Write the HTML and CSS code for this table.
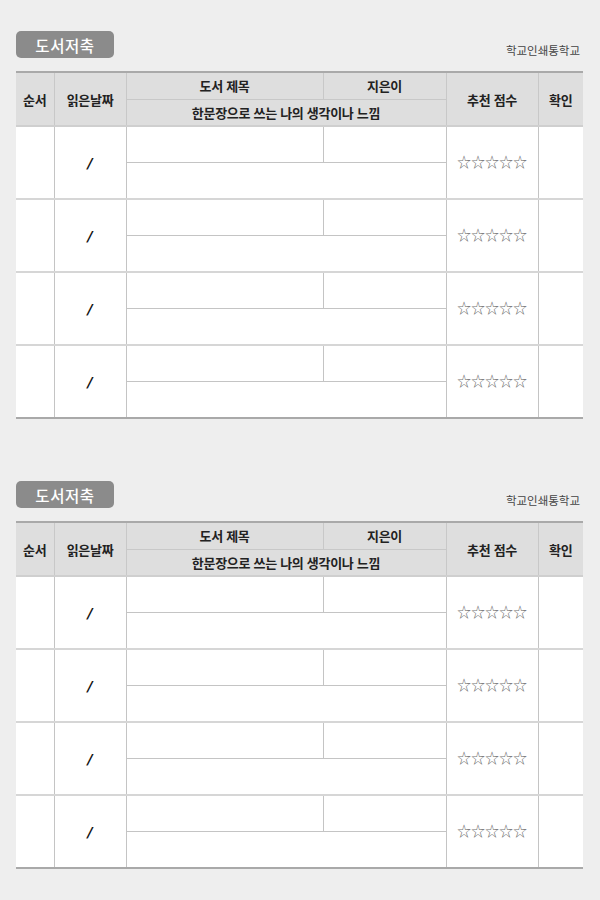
FILE: index.html
```html
<!DOCTYPE html>
<html lang="ko">
<head>
<meta charset="utf-8">
<title>도서저축</title>
<link rel="stylesheet" href="styles.css">
</head>
<body>
<section class="sheet">
  <div class="sheet-head">
    <span class="badge">도서저축</span>
    <span class="school">학교인쇄통학교</span>
  </div>
  <table class="log">
    <colgroup>
      <col class="c-no"><col class="c-date"><col class="c-title"><col class="c-author"><col class="c-score"><col class="c-check">
    </colgroup>
    <thead>
      <tr>
        <th rowspan="2">순서</th>
        <th rowspan="2">읽은날짜</th>
        <th class="th-top">도서 제목</th>
        <th class="th-top">지은이</th>
        <th rowspan="2">추천 점수</th>
        <th rowspan="2">확인</th>
      </tr>
      <tr>
        <th colspan="2" class="th-bottom">한문장으로 쓰는 나의 생각이나 느낌</th>
      </tr>
    </thead>
    <tbody>
      <tr class="r-top"><td rowspan="2"></td><td rowspan="2" class="date">/</td><td></td><td></td><td rowspan="2" class="stars">☆☆☆☆☆</td><td rowspan="2"></td></tr>
      <tr class="r-bottom"><td colspan="2"></td></tr>
    </tbody>
    <tbody>
      <tr class="r-top"><td rowspan="2"></td><td rowspan="2" class="date">/</td><td></td><td></td><td rowspan="2" class="stars">☆☆☆☆☆</td><td rowspan="2"></td></tr>
      <tr class="r-bottom"><td colspan="2"></td></tr>
    </tbody>
    <tbody>
      <tr class="r-top"><td rowspan="2"></td><td rowspan="2" class="date">/</td><td></td><td></td><td rowspan="2" class="stars">☆☆☆☆☆</td><td rowspan="2"></td></tr>
      <tr class="r-bottom"><td colspan="2"></td></tr>
    </tbody>
    <tbody>
      <tr class="r-top"><td rowspan="2"></td><td rowspan="2" class="date">/</td><td></td><td></td><td rowspan="2" class="stars">☆☆☆☆☆</td><td rowspan="2"></td></tr>
      <tr class="r-bottom"><td colspan="2"></td></tr>
    </tbody>
  </table>
</section>

<section class="sheet">
  <div class="sheet-head">
    <span class="badge">도서저축</span>
    <span class="school">학교인쇄통학교</span>
  </div>
  <table class="log">
    <colgroup>
      <col class="c-no"><col class="c-date"><col class="c-title"><col class="c-author"><col class="c-score"><col class="c-check">
    </colgroup>
    <thead>
      <tr>
        <th rowspan="2">순서</th>
        <th rowspan="2">읽은날짜</th>
        <th class="th-top">도서 제목</th>
        <th class="th-top">지은이</th>
        <th rowspan="2">추천 점수</th>
        <th rowspan="2">확인</th>
      </tr>
      <tr>
        <th colspan="2" class="th-bottom">한문장으로 쓰는 나의 생각이나 느낌</th>
      </tr>
    </thead>
    <tbody>
      <tr class="r-top"><td rowspan="2"></td><td rowspan="2" class="date">/</td><td></td><td></td><td rowspan="2" class="stars">☆☆☆☆☆</td><td rowspan="2"></td></tr>
      <tr class="r-bottom"><td colspan="2"></td></tr>
    </tbody>
    <tbody>
      <tr class="r-top"><td rowspan="2"></td><td rowspan="2" class="date">/</td><td></td><td></td><td rowspan="2" class="stars">☆☆☆☆☆</td><td rowspan="2"></td></tr>
      <tr class="r-bottom"><td colspan="2"></td></tr>
    </tbody>
    <tbody>
      <tr class="r-top"><td rowspan="2"></td><td rowspan="2" class="date">/</td><td></td><td></td><td rowspan="2" class="stars">☆☆☆☆☆</td><td rowspan="2"></td></tr>
      <tr class="r-bottom"><td colspan="2"></td></tr>
    </tbody>
    <tbody>
      <tr class="r-top"><td rowspan="2"></td><td rowspan="2" class="date">/</td><td></td><td></td><td rowspan="2" class="stars">☆☆☆☆☆</td><td rowspan="2"></td></tr>
      <tr class="r-bottom"><td colspan="2"></td></tr>
    </tbody>
  </table>
</section>
</body>
</html>
```

FILE: styles.css
```css
* { box-sizing: border-box; }

html, body {
  margin: 0;
  padding: 0;
  background: #eeeeee;
}

body {
  padding: 31px 17px 0 16px;
  font-family: "Noto Sans CJK KR", "Noto Sans", sans-serif;
  color: #222;
}

.sheet + .sheet {
  margin-top: 62px;
}

.sheet-head {
  display: flex;
  justify-content: space-between;
  align-items: flex-end;
  margin-bottom: 13px;
}

.badge {
  display: flex;
  align-items: center;
  justify-content: center;
  width: 98px;
  height: 27px;
  background: #8b8b8b;
  color: #ffffff;
  border-radius: 5px;
  font-size: 15.5px;
  font-weight: 500;
  letter-spacing: 0.6px;
}

.school {
  font-size: 11.5px;
  color: #444;
  line-height: 14px;
  margin-right: 3px;
  margin-bottom: 1px;
}

.log {
  width: 567px;
  border-collapse: collapse;
  table-layout: fixed;
  background: #ffffff;
  border-top: 2px solid #a9a9a9;
  border-bottom: 2px solid #a9a9a9;
}

.c-no { width: 38px; }
.c-date { width: 72px; }
.c-title { width: 197px; }
.c-author { width: 123px; }
.c-score { width: 92px; }
.c-check { width: 45px; }

.log th {
  background: #dedede;
  border: 1px solid #c8c8c8;
  font-size: 13px;
  font-weight: 700;
  color: #222;
  letter-spacing: -0.3px;
  padding: 0;
  height: 27px;
  line-height: 15px;
}

.log thead tr:first-child th:first-child,
.log tbody tr td:first-child { border-left: none; }
.log thead tr:first-child th:last-child,
.log tbody tr.r-top td:last-child { border-right: none; }

.log thead { border-bottom: 2px solid #cfcfcf; }

.log td {
  border: 1px solid #c4c4c4;
  padding: 0;
  height: 36px;
  text-align: center;
  vertical-align: middle;
}

.log tbody + tbody { border-top: 2px solid #d6d6d6; }

.log tbody tr.r-bottom td { height: 37px; }

.date {
  font-family: "DejaVu Sans", sans-serif;
  font-size: 14px;
  font-style: italic;
  font-weight: 700;
  color: #111;
}

.log td.stars {
  font-family: "Noto Sans CJK KR", sans-serif;
  font-size: 14px;
  line-height: 14px;
  color: #707070;
  letter-spacing: 0;
  padding-bottom: 3px;
}
```
